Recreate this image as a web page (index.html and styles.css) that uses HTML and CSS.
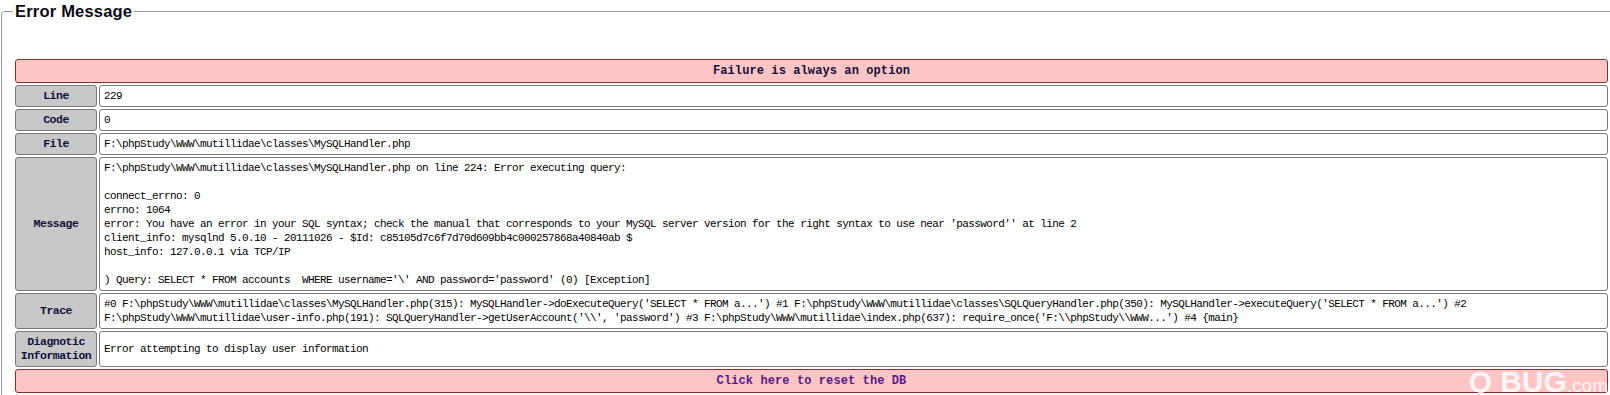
FILE: index.html
```html
<!DOCTYPE html>
<html lang="en">
<head>
  <meta charset="UTF-8">
  <title>Error Message</title>
  <link rel="stylesheet" href="styles.css">
</head>
<body>

  <fieldset class="error-box">
    <legend class="error-legend">Error Message</legend>
    <table class="error-table">
      <tr>
        <td colspan="2" class="error-header">Failure is always an option</td>
      </tr>
      <tr>
        <th class="error-label">Line</th>
        <td class="error-value">229</td>
      </tr>
      <tr>
        <th class="error-label">Code</th>
        <td class="error-value">0</td>
      </tr>
      <tr>
        <th class="error-label">File</th>
        <td class="error-value">F:\phpStudy\WWW\mutillidae\classes\MySQLHandler.php</td>
      </tr>
      <tr>
        <th class="error-label">Message</th>
        <td class="error-value">F:\phpStudy\WWW\mutillidae\classes\MySQLHandler.php on line 224: Error executing query:<br>
          <br>
          connect_errno: 0<br>
          errno: 1064<br>
          error: You have an error in your SQL syntax; check the manual that corresponds to your MySQL server version for the right syntax to use near 'password'' at line 2<br>
          client_info: mysqlnd 5.0.10 - 20111026 - $Id: c85105d7c6f7d70d609bb4c000257868a40840ab $<br>
          host_info: 127.0.0.1 via TCP/IP<br>
          <br>
          ) Query: SELECT * FROM accounts&nbsp; WHERE username='\' AND password='password' (0) [Exception]</td>
      </tr>
      <tr>
        <th class="error-label">Trace</th>
        <td class="error-value">#0 F:\phpStudy\WWW\mutillidae\classes\MySQLHandler.php(315): MySQLHandler-&gt;doExecuteQuery('SELECT * FROM a...') #1 F:\phpStudy\WWW\mutillidae\classes\SQLQueryHandler.php(350): MySQLHandler-&gt;executeQuery('SELECT * FROM a...') #2 F:\phpStudy\WWW\mutillidae\user-info.php(191): SQLQueryHandler-&gt;getUserAccount('\\', 'password') #3 F:\phpStudy\WWW\mutillidae\index.php(637): require_once('F:\\phpStudy\\WWW...') #4 {main}</td>
      </tr>
      <tr>
        <th class="error-label">Diagnotic Information</th>
        <td class="error-value">Error attempting to display user information</td>
      </tr>
      <tr>
        <td colspan="2" class="error-header"><a class="reset-link" href="#">Click here to reset the DB</a></td>
      </tr>
    </table>
  </fieldset>

  <div class="watermark">Q<span class="watermark-main">BUG</span><span class="watermark-small">.com</span></div>

</body>
</html>
```

FILE: styles.css
```css
html, body {
  margin: 0;
  height: 100%;
  overflow: hidden;
  background: #fff;
}
body {
  position: relative;
}
.error-box {
  margin: 0 0 0 1px;
  padding: 0 11px 10px 11px;
  border: 1px solid #999;
  border-radius: 4px;
  width: 1597px;
}
.error-legend {
  padding: 0 2px;
  font-family: 'Liberation Sans', Arial, sans-serif;
  font-size: 16.5px;
  font-weight: bold;
  letter-spacing: 0.2px;
  line-height: 23px;
  color: #0a0a14;
}
.error-table {
  width: 1597px;
  margin-top: 34px;
  border-collapse: separate;
  border-spacing: 2px;
  font-family: 'Liberation Mono', 'Courier New', monospace;
  font-size: 11px;
  line-height: 14px;
}
.error-table td,
.error-table th {
  border: 1px solid #7a7a7a;
  border-radius: 3px;
}
.error-header {
  padding: 4px;
  background-color: #ffc5c5;
  border-color: #862f2f !important;
  text-align: center;
  font-size: 12px;
  font-weight: bold;
  letter-spacing: 0.1px;
  color: #10103a;
}
.error-label {
  width: 82px;
  box-sizing: border-box;
  padding: 3px 2px;
  background-color: #c8c8c8;
  text-align: center;
  font-size: 11.5px;
  font-weight: bold;
  letter-spacing: -0.5px;
  color: #10103a;
}
.error-value {
  padding: 3px 4px;
  text-align: left;
  letter-spacing: -0.6px;
  color: #000;
}
.reset-link {
  color: #571a8a;
  text-decoration: none;
}
.watermark {
  position: absolute;
  right: 2px;
  bottom: -4px;
  font-family: 'Liberation Sans', Arial, sans-serif;
  font-weight: bold;
  font-size: 30px;
  line-height: 26px;
  color: rgba(255, 255, 255, 0.85);
}
.watermark-main {
  margin-left: 8px;
}
.watermark-small {
  font-size: 19px;
  font-weight: normal;
}
```
